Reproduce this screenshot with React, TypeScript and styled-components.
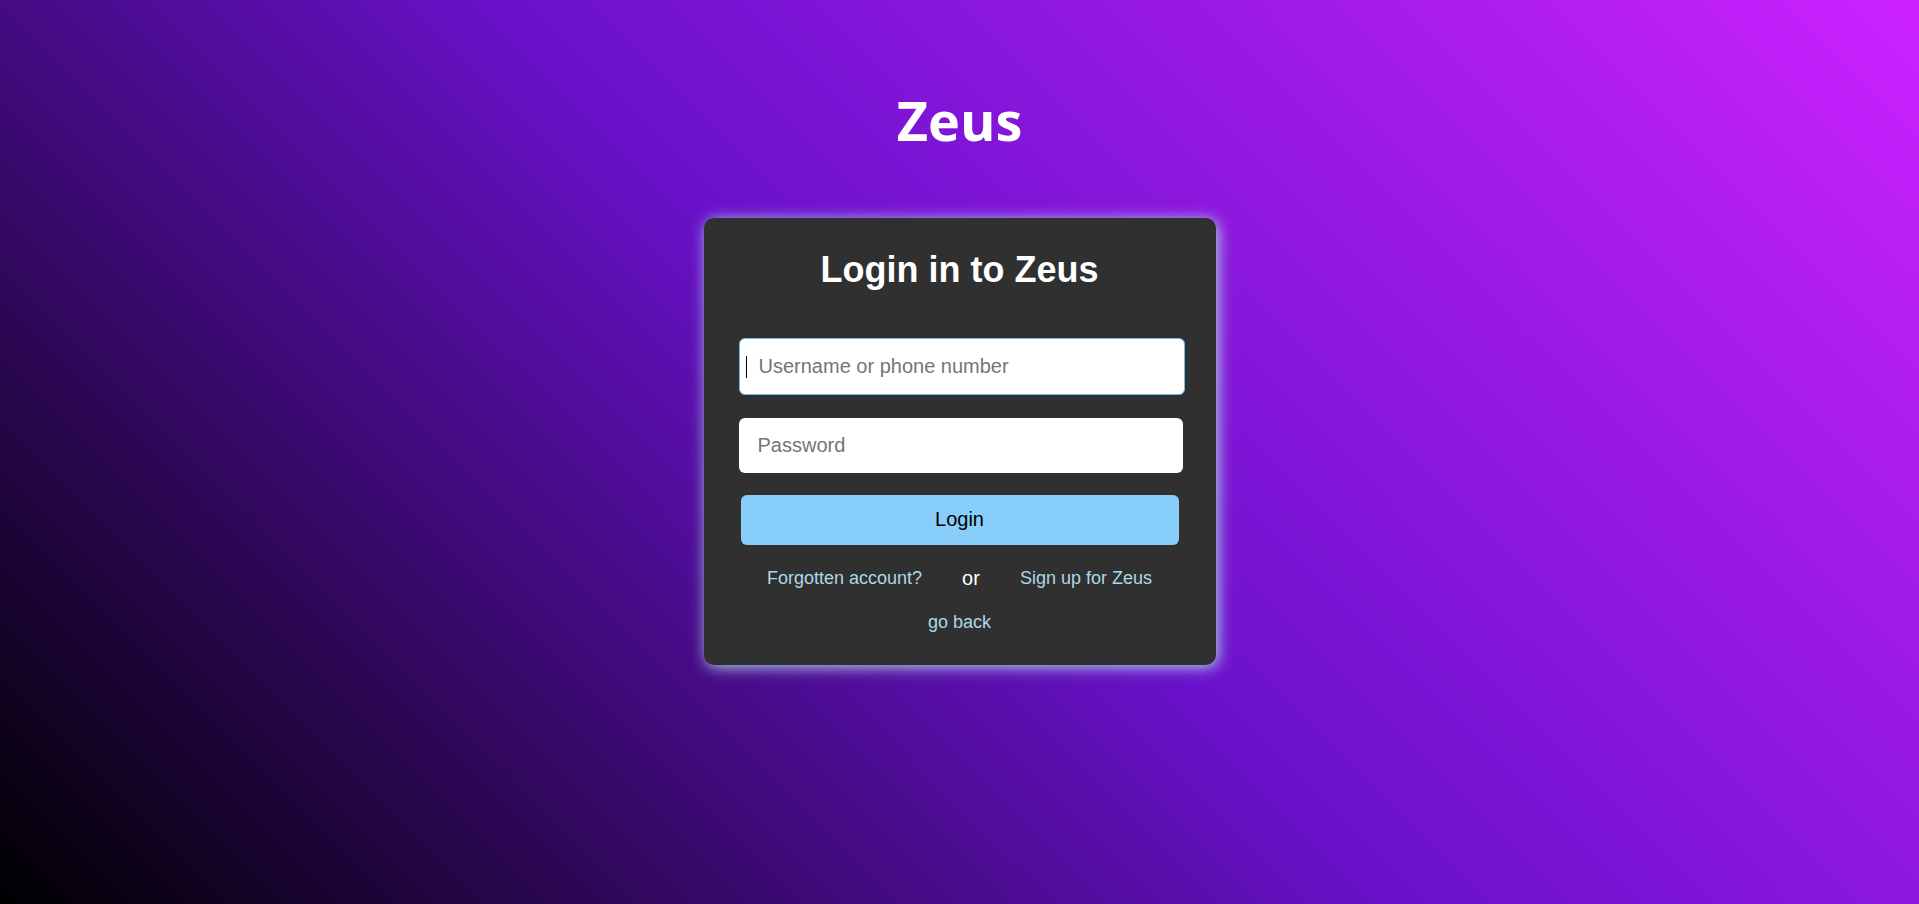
import React from "react";
import styled, { createGlobalStyle } from "styled-components";

const GlobalStyle = createGlobalStyle`
  *, *::before, *::after { box-sizing: border-box; }
  body {
    margin: 0;
    color: #fff;
    font-family: Arial, "Liberation Sans", sans-serif;
  }
`;

const Page = styled.main`
  display: flex;
  flex-direction: column;
  align-items: center;
  min-height: 100vh;
  padding: 80px 16px;
  background: linear-gradient(45deg, #000, #6a11cb, #cc22ff);
`;

const Brand = styled.h1`
  margin: 0 0 58px;
  font: 700 54px/80px "Segoe UI", "Open Sans", sans-serif;
`;

const Card = styled.form`
  display: flex;
  flex-direction: column;
  width: 100%;
  max-width: 512px;
  padding: 31px 35px 30px;
  border-radius: 10px;
  background: #303030;
  box-shadow: 2px 2px 15px lightblue;
`;

const Title = styled.h2`
  margin: 0 0 47px;
  font-size: 36px;
  line-height: 42px;
  text-align: center;
`;

const Fields = styled.div`
  display: flex;
  flex-direction: column;
  gap: 23px;
`;

const Field = styled.div<{ $active?: boolean }>`
  position: relative;
  width: ${(p) => (p.$active ? "calc(100% + 4px)" : "calc(100% + 2px)")};
`;

const Input = styled.input<{ $active?: boolean }>`
  display: block;
  width: 100%;
  height: ${(p) => (p.$active ? 57 : 55)}px;
  padding: 0 6px;
  border: ${(p) => (p.$active ? "1px solid #6bbcf0" : "none")};
  border-radius: 6px;
  outline: none;
  background: #fff;
  color: #000;
  font: 20px Arial, "Liberation Sans", sans-serif;

  &::placeholder {
    padding-left: 13px;
    color: #757575;
    opacity: 1;
  }
`;

const Caret = styled.span`
  position: absolute;
  top: 18px;
  left: 7px;
  width: 1px;
  height: 22px;
  background: #000;
`;

const LoginButton = styled.button`
  height: 50px;
  margin: 22px 2px 0;
  padding: 0 0 2px;
  border: none;
  border-radius: 6px;
  background: lightskyblue;
  color: #000;
  font: 20px Arial, "Liberation Sans", sans-serif;
  cursor: pointer;
`;

const Links = styled.div`
  display: flex;
  flex-wrap: wrap;
  justify-content: center;
  align-items: center;
  column-gap: 40px;
  margin-top: 20px;
  font-size: 20px;
  line-height: 26px;

  & + & {
    margin-top: 18px;
  }
`;

const TextLink = styled.a`
  color: lightblue;
  font-size: 18px;
  text-decoration: none;
`;

export default function App() {
  return (
    <>
      <GlobalStyle />
      <Page>
        <Brand>Zeus</Brand>
        <Card onSubmit={(e: React.FormEvent) => e.preventDefault()}>
          <Title>Login in to Zeus</Title>
          <Fields>
            <Field $active>
              <Input
                $active
                type="text"
                name="username"
                aria-label="Username or phone number"
                placeholder="Username or phone number"
              />
              <Caret aria-hidden="true" />
            </Field>
            <Field>
              <Input
                type="password"
                name="password"
                aria-label="Password"
                placeholder="Password"
              />
            </Field>
          </Fields>
          <LoginButton type="submit">Login</LoginButton>
          <Links>
            <TextLink href="#forgotten">Forgotten account?</TextLink>
            <span>or</span>
            <TextLink href="#signup">Sign up for Zeus</TextLink>
          </Links>
          <Links>
            <TextLink href="#back">go back</TextLink>
          </Links>
        </Card>
      </Page>
    </>
  );
}
